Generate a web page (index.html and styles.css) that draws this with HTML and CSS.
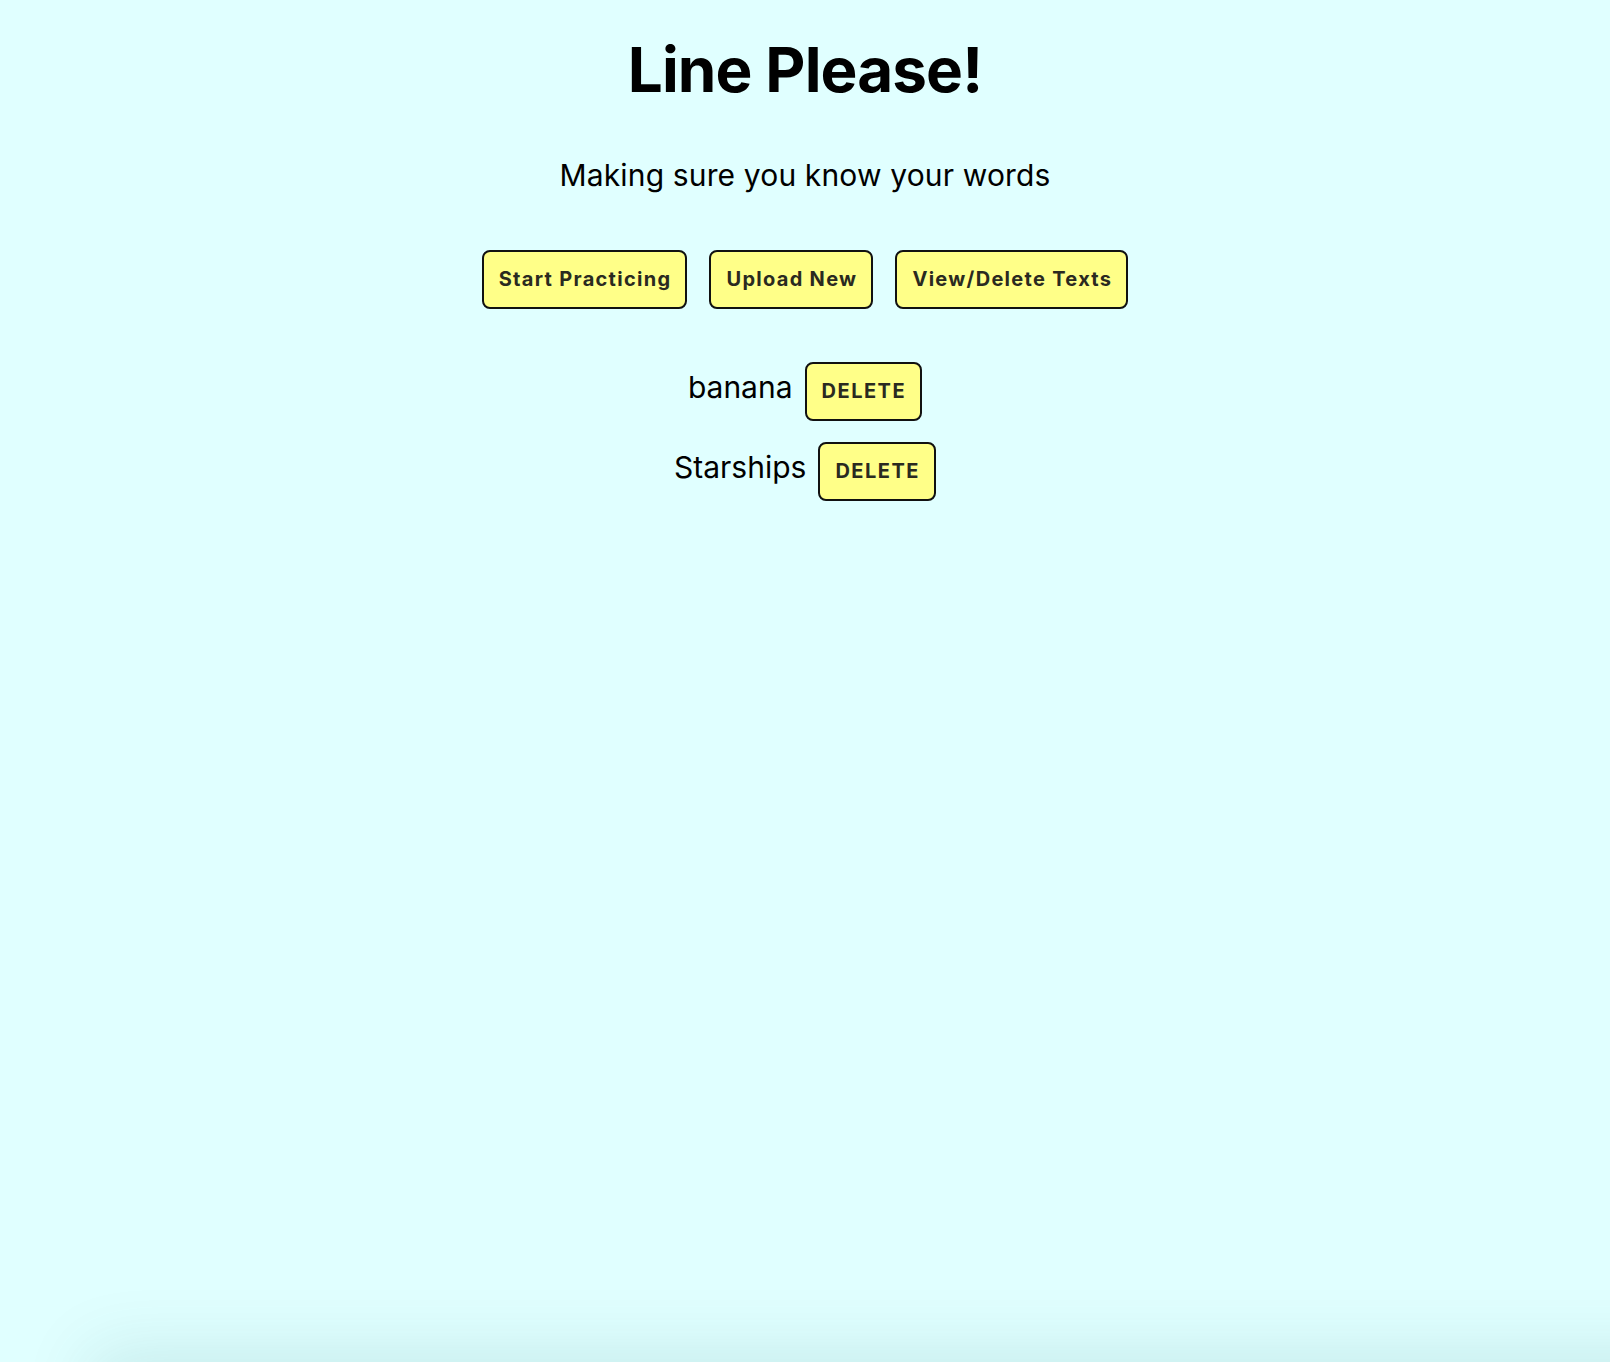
FILE: index.html
```html
<!DOCTYPE html>
<html lang="en">
<head>
<meta charset="utf-8">
<title>Line Please!</title>
<link rel="stylesheet" href="styles.css">
</head>
<body>
<main class="app">
  <h1 class="title">Line Please!</h1>
  <p class="subtitle">Making sure you know your words</p>
  <nav class="nav">
    <button class="btn btn-nav">Start Practicing</button>
    <button class="btn btn-nav">Upload New</button>
    <button class="btn btn-nav">View/Delete Texts</button>
  </nav>
  <ul class="texts">
    <li class="text-row"><span class="text-name">banana</span><button class="btn btn-delete">Delete</button></li>
    <li class="text-row"><span class="text-name">Starships</span><button class="btn btn-delete">Delete</button></li>
  </ul>
</main>
<div class="bottom-shadow"></div>
</body>
</html>
```
FILE: styles.css
```css
html, body {
  margin: 0;
  padding: 0;
  height: 100%;
  overflow: hidden;
}
body {
  background: #e0ffff;
  font-family: Inter, "Noto Sans", "Liberation Sans", sans-serif;
  color: #000;
}
.app {
  display: flex;
  flex-direction: column;
  align-items: center;
  padding-top: 32px;
}
.title {
  margin: 0;
  font-size: 62px;
  font-weight: 700;
  letter-spacing: -0.9px;
  line-height: normal;
}
.subtitle {
  margin: 50px 0 0;
  font-size: 30px;
  font-weight: 400;
  letter-spacing: 0.15px;
  line-height: normal;
}
.nav {
  display: flex;
  gap: 22px;
  margin-top: 57px;
}
.btn {
  font-family: Inter, "Noto Sans", "Liberation Sans", sans-serif;
  font-size: 20px;
  font-weight: 700;
  line-height: 25px;
  color: #2a2a20;
  background: #ffff88;
  border: 2px solid #111;
  border-radius: 8px;
  padding: 15px 15px;
  cursor: pointer;
}
.btn-nav {
  letter-spacing: 1.3px;
  padding: 15px 14px 15px 15px;
}
.texts {
  list-style: none;
  margin: 53px 0 0;
  padding: 0;
  display: flex;
  flex-direction: column;
  align-items: center;
  gap: 21px;
}
.text-row {
  display: flex;
  align-items: baseline;
  gap: 12px;
}
.text-name {
  font-size: 30px;
}
.btn-delete {
  text-transform: uppercase;
  letter-spacing: 1.5px;
  padding: 15px 14px 15px 15px;
}
.bottom-shadow {
  position: fixed;
  left: 100px;
  right: -100px;
  top: 100%;
  height: 100px;
  box-shadow: 0 0 70px 10px rgba(0, 90, 90, 0.12);
  pointer-events: none;
}
```
